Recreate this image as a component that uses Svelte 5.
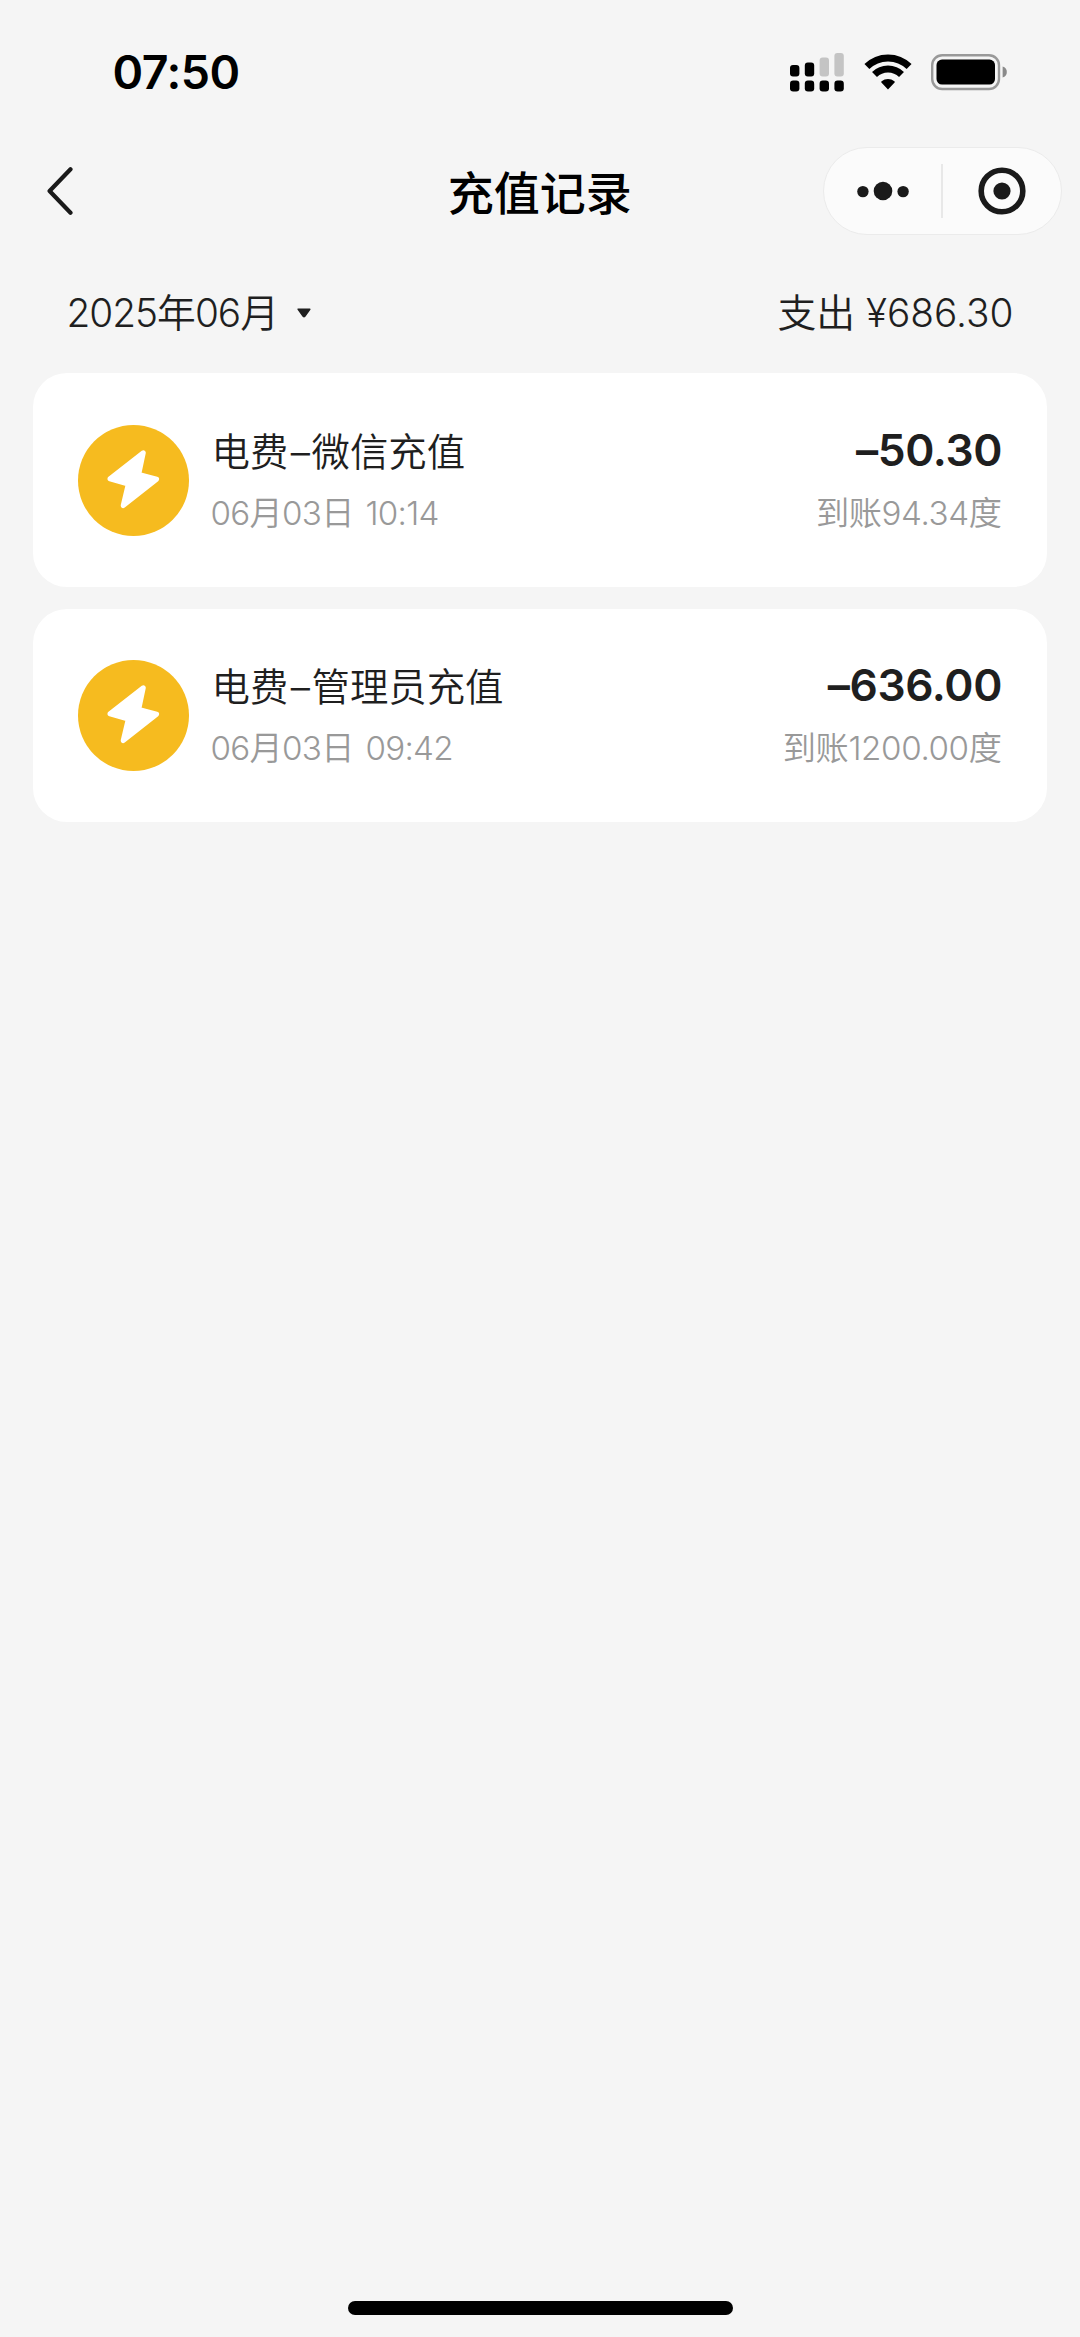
<script>
	let month = $state('2025年06月');

	const total = '686.30';

	const records = [
		{ id: 1, kind: '电费', method: '微信充值', time: '06月03日 10:14', amount: '–50.30', credit: '94.34' },
		{ id: 2, kind: '电费', method: '管理员充值', time: '06月03日 09:42', amount: '–636.00', credit: '1200.00' }
	];
</script>

<div class="page">
	<header class="status">
		<span class="clock">07:50</span>
		<div class="status-icons">
			<svg class="signal" width="54" height="40" viewBox="0 0 54 40">
				<rect x="0" y="13" width="9.4" height="11.6" rx="3" />
				<rect x="14.8" y="10.5" width="9.4" height="14.1" rx="3" />
				<rect class="off" x="29.6" y="5.5" width="9.4" height="19.1" rx="3" />
				<rect class="off" x="44.4" y="1" width="9.4" height="23.6" rx="3" />
				<rect x="0" y="28.6" width="9.4" height="10.8" rx="3.2" />
				<rect x="14.8" y="28.6" width="9.4" height="10.8" rx="3.2" />
				<rect x="29.6" y="28.6" width="9.4" height="10.8" rx="3.2" />
				<rect x="44.4" y="28.6" width="9.4" height="10.8" rx="3.2" />
			</svg>
			<svg class="wifi" width="48" height="36" viewBox="0 0 48 36">
				<path d="M2.9 12.6 A30 30 0 0 1 45.1 12.6" />
				<path d="M10.5 20.6 A19.2 19.2 0 0 1 37.5 20.6" />
				<path class="dot" d="M24 35.4 L17.4 28.6 Q16.8 27.8 17.6 27.2 A10.5 10.5 0 0 1 30.4 27.2 Q31.2 27.8 30.6 28.6 Z" />
			</svg>
			<svg class="battery" width="77" height="37" viewBox="0 0 77 37">
				<rect class="shell" x="1.2" y="1.2" width="66.8" height="33.8" rx="10" />
				<rect x="5.5" y="5.6" width="58.5" height="25" rx="5.5" />
				<path class="nub" d="M71.6 12.6 Q75.8 13.8 75.8 18.1 Q75.8 22.4 71.6 23.6 Z" />
			</svg>
		</div>
	</header>

	<nav class="nav">
		<button class="back" aria-label="返回">
			<svg width="28" height="50" viewBox="0 0 28 50">
				<path d="M25.5 3.2 L4.6 25 L25.5 46.8" />
			</svg>
		</button>
		<h1>充值记录</h1>
		<div class="capsule">
			<svg class="more" width="52" height="20" viewBox="0 0 52 20">
				<circle cx="5.9" cy="10.6" r="5.7" />
				<circle cx="26" cy="10" r="9.3" />
				<circle cx="46.1" cy="10.6" r="5.7" />
			</svg>
			<span class="divider"></span>
			<svg class="close" width="48" height="48" viewBox="0 0 48 48">
				<circle class="ring" cx="24" cy="24" r="20.8" />
				<circle cx="24" cy="24" r="8.6" />
			</svg>
		</div>
	</nav>

	<div class="summary">
		<button class="month">
			<span>{month}</span>
			<svg width="14" height="10" viewBox="0 0 14 10">
				<path d="M1.2 1.2 H12.8 L7.8 8.2 Q7 9 6.2 8.2 Z" />
			</svg>
		</button>
		<span class="total">支出 ¥{total}</span>
	</div>

	<main class="list">
		{#each records as r (r.id)}
			<article class="card">
				<svg class="icon" width="111" height="111" viewBox="0 0 111 111">
					<circle cx="55.5" cy="55.5" r="55.5" />
					<path d="M65.3 27.8 L60.7 49.5 L78.6 54.2 L45.2 80.6 L50.3 59 L32 53.8 Z" />
				</svg>
				<div class="info">
					<span class="title">{r.kind}<span class="dash">–</span>{r.method}</span>
					<span class="time">{r.time}</span>
				</div>
				<div class="money">
					<span class="amount">{r.amount}</span>
					<span class="credit">到账{r.credit}度</span>
				</div>
			</article>
		{/each}
	</main>

	<div class="home-bar"></div>
</div>

<style>
	:global(body) {
		margin: 0;
		background: #f5f5f5;
	}

	.page {
		box-sizing: border-box;
		width: 1080px;
		height: 2337px;
		display: flex;
		flex-direction: column;
		background: #f5f5f5;
		color: #1f1f1f;
		font-family: Inter, 'Noto Sans CJK SC', sans-serif;
		overflow: hidden;
	}

	button {
		border: 0;
		padding: 0;
		background: none;
		font: inherit;
		color: inherit;
		letter-spacing: inherit;
	}

	svg { display: block; flex-shrink: 0; }

	.status {
		height: 144px;
		box-sizing: border-box;
		padding: 0 72px 0 112.5px;
		display: flex;
		align-items: center;
		justify-content: space-between;
		color: #000;
	}
	.clock { font-size: 46.5px; font-weight: 600; line-height: 56px; letter-spacing: -0.5px; }

	.status-icons { display: flex; align-items: center; }
	.signal .off { fill: #c4c4c4; }
	.wifi { margin-left: 20px; }
	.wifi path { fill: none; stroke: #000; stroke-width: 7; }
	.wifi .dot { fill: #000; stroke: none; }
	.battery { margin-left: 19px; }
	.battery .shell { fill: none; stroke: #999; stroke-width: 2.4; }
	.battery .nub { fill: #8a8a8a; }

	.nav {
		height: 94px;
		box-sizing: border-box;
		padding: 0 18.5px 0 45px;
		display: grid;
		grid-template-columns: 1fr auto 1fr;
		align-items: center;
	}
	.back { justify-self: start; }
	.back path {
		fill: none; stroke: #1a1a1a; stroke-width: 4.2;
		stroke-linecap: round; stroke-linejoin: round;
	}
	h1 {
		margin: 3px 0 0 -27px;
		font-size: 46px; font-weight: 500; line-height: 60px;
		color: #000;
	}

	.capsule {
		justify-self: end;
		box-sizing: border-box;
		width: 239px; height: 88px;
		border: 1.5px solid #ebebeb; border-radius: 44px;
		background: #fbfbfb;
		display: grid;
		grid-template-columns: 1fr 2px 1fr;
		align-items: center;
		justify-items: center;
		fill: #1a1a1a;
	}
	.more { margin-left: 2px; }
	.divider { width: 2px; height: 54px; background: #e8e8e8; }
	.close .ring { fill: none; stroke: #1a1a1a; stroke-width: 5.6; }

	.summary {
		height: 135px;
		box-sizing: border-box;
		padding: 15px 66.5px 0 66.5px;
		display: flex;
		align-items: center;
		justify-content: space-between;
		font-size: 38.8px;
		font-weight: 350;
		line-height: 50px;
	}
	.month {
		display: flex;
		align-items: center;
		gap: 19px;
		letter-spacing: -1px;
	}
	.month path { fill: #1f1f1f; stroke: #1f1f1f; stroke-width: 1.5; stroke-linejoin: round; }

	.list {
		padding: 0 33px;
		display: flex;
		flex-direction: column;
		gap: 22px;
	}

	.card {
		height: 213.5px;
		box-sizing: border-box;
		padding: 1px 46px 0 44.5px;
		border-radius: 34px;
		background: #fff;
		display: flex;
		align-items: center;
	}
	.icon circle { fill: #f6bb1f; }
	.icon path { fill: #fff; stroke: #fff; stroke-width: 5; stroke-linejoin: round; }

	.info, .money {
		display: flex;
		flex-direction: column;
		gap: 11px;
	}
	.info { margin-left: 22px; padding-top: 2px; flex: 1; }
	.money { align-items: flex-end; }

	.title, .amount { line-height: 52px; }
	.title { margin-left: 1px; font-size: 38.4px; font-weight: 350; }
	.dash { margin: 0 1.5px 0 2.5px; font-weight: 300; }
	.amount {
		margin-right: -1px;
		font-size: 44.3px; font-weight: 600;
		letter-spacing: -0.4px;
	}
	.time, .credit {
		font-size: 33.2px; font-weight: 350; line-height: 48px;
		color: #999;
	}
	.time { letter-spacing: -0.7px; word-spacing: 3px; }
	.credit { margin: 2px -0.5px 0 0; letter-spacing: -0.4px; }

	.home-bar {
		width: 385px; height: 14px;
		margin: auto auto 22px;
		border-radius: 7px;
		background: #000;
	}
</style>
